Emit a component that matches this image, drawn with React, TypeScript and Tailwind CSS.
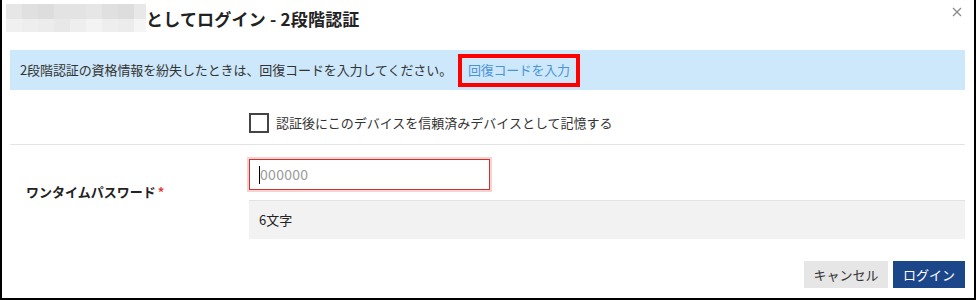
import React from "react";

const topShades = ["#e6e6e6", "#e0e0e0", "#dddddd", "#e3e3e3", "#e3e3e3", "#e6e6e6", "#e0e0e0", "#dddddd", "#e8e8e8"];
const bottomShades = ["#f0f0f0", "#eeeeee", "#ececec", "#e8e8e8", "#eeeeee", "#f3f3f3", "#eeeeee", "#ececec", "#f5f5f5"];

// pixelated (blurred) user name in the title
const Mosaic: React.FC = () => (
  <div className="flex flex-col w-[140px] h-[28px]">
    <div className="flex h-[15px]">
      {topShades.map((c, i) => (
        <div key={i} className={i === 8 ? "w-[12px]" : "w-[16px]"} style={{ backgroundColor: c }} />
      ))}
    </div>
    <div className="flex h-[13px]">
      {bottomShades.map((c, i) => (
        <div key={i} className={i === 8 ? "w-[12px]" : "w-[16px]"} style={{ backgroundColor: c }} />
      ))}
    </div>
  </div>
);

const App: React.FC = () => {
  return (
    <div className="relative w-[976px] h-[300px] bg-white border-x-2 border-b-2 border-black font-['Noto_Sans_CJK_JP',sans-serif] text-[#333333]">
      {/* header */}
      <div className="flex items-center h-[36px] pl-1">
        <Mosaic />
        <h1 className="text-[17px] font-bold text-[#222222] leading-none tracking-[0.2px]">
          としてログイン - 2段階認証
        </h1>
      </div>
      <button className="absolute top-[7px] right-[12px] w-[10px] h-[10px] text-[#8a8a8a]">
        <svg viewBox="0 0 10 10" width="10" height="10">
          <path d="M1 1 L9 9 M9 1 L1 9" stroke="currentColor" strokeWidth="1.3" />
        </svg>
      </button>

      <div className="pl-2 pr-[9px]">
        {/* info alert */}
        <div className="mt-[14px] h-[40px] flex items-center pl-[10px] bg-[#cce8fa]">
          <span className="text-[13px] tracking-[-0.1px]">
            2段階認証の資格情報を紛失したときは、回復コードを入力してください。
          </span>
          <span className="ml-[6px] h-[33px] flex items-center px-[6px] border-[4px] border-[#ff0000]">
            <a href="#" className="text-[13px] text-[#4d93d9] tracking-[-0.3px]">
              回復コードを入力
            </a>
          </span>
        </div>

        {/* remember device */}
        <label className="mt-[23px] ml-[239px] flex items-center gap-[7px] h-[20px]">
          <span className="w-[20px] h-[20px] border-2 border-[#444444] bg-white" />
          <span className="text-[13px]">認証後にこのデバイスを信頼済みデバイスとして記憶する</span>
        </label>

        <div className="mt-[11px] h-px bg-[#e3e3e3]" />

        {/* one-time password */}
        <div className="flex mt-[14px]">
          <div className="w-[239px] pl-[16px] pt-[23px] text-[13px] font-bold text-[#222222] leading-[20px]">
            ワンタイムパスワード<span className="text-[#e03c3c] ml-[2px]">*</span>
          </div>
          <div className="flex-1 flex flex-col">
            <div className="w-[241px] h-[31px] border border-[#d2322d] shadow-[0_0_0_2px_#f7d2d2] flex items-center pl-[9px]">
              <span className="w-px h-[18px] bg-black" />
              <span className="text-[14px] text-[#9a9a9a] tracking-[0.3px]">000000</span>
            </div>
            <div className="mt-[10px] h-[39px] bg-[#f2f2f2] border-t border-[#e2e2e2] flex items-center pl-[10px] text-[13px] text-[#222222]">
              6文字
            </div>
          </div>
        </div>

        {/* actions */}
        <div className="mt-[22px] flex justify-end gap-[5px]">
          <button className="w-[84px] h-[27px] bg-[#e6e6e6] text-[13px] text-[#333333]">キャンセル</button>
          <button className="w-[72px] h-[27px] bg-[#1c468a] text-[13px] text-white">ログイン</button>
        </div>
      </div>
    </div>
  );
};

export default App;
